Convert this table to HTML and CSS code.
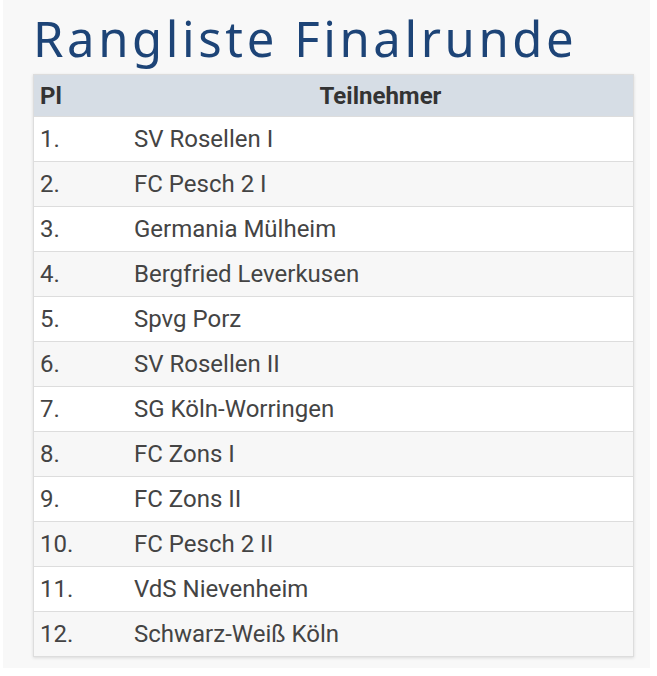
FILE: index.html
```html
<!DOCTYPE html>
<html lang="de">
<head>
<meta charset="utf-8">
<link rel="stylesheet" href="styles.css">
</head>
<body>
<div class="page">
  <h1 class="title">Rangliste Finalrunde</h1>
  <table class="ranking">
    <thead>
      <tr><th class="pl">Pl</th><th class="team">Teilnehmer</th></tr>
    </thead>
    <tbody>
      <tr><td class="pl">1.</td><td>SV Rosellen I</td></tr>
      <tr><td class="pl">2.</td><td>FC Pesch 2 I</td></tr>
      <tr><td class="pl">3.</td><td>Germania Mülheim</td></tr>
      <tr><td class="pl">4.</td><td>Bergfried Leverkusen</td></tr>
      <tr><td class="pl">5.</td><td>Spvg Porz</td></tr>
      <tr><td class="pl">6.</td><td>SV Rosellen II</td></tr>
      <tr><td class="pl">7.</td><td>SG Köln-Worringen</td></tr>
      <tr><td class="pl">8.</td><td>FC Zons I</td></tr>
      <tr><td class="pl">9.</td><td>FC Zons II</td></tr>
      <tr><td class="pl">10.</td><td>FC Pesch 2 II</td></tr>
      <tr><td class="pl">11.</td><td>VdS Nievenheim</td></tr>
      <tr><td class="pl">12.</td><td>Schwarz-Weiß Köln</td></tr>
    </tbody>
  </table>
</div>
</body>
</html>
```
FILE: styles.css
```css
html, body {
  margin: 0;
  padding: 0;
  background: #ffffff;
}
.page {
  margin: 0 7px 0 3px;
  padding: 8px 13px 11px 30px;
  background: #f8f8f8;
}
.title {
  margin: 0 0 5px 0;
  font-family: "Noto Sans", sans-serif;
  font-weight: 400;
  font-size: 49px;
  letter-spacing: 3.6px;
  line-height: 61px;
  color: #1d4477;
}
.ranking {
  width: 601px;
  border-collapse: collapse;
  font-family: Roboto, sans-serif;
  font-size: 24px;
  color: #444;
  background: #fff;
  border: 1px solid #ddd;
  box-shadow: 0 1px 3px rgba(0,0,0,0.12);
}
.ranking th {
  background: #d6dde5;
  color: #333;
  font-weight: 700;
  height: 41px;
  line-height: 28px;
  padding: 0 6px;
  text-align: center;
}
.ranking th.pl {
  text-align: left;
}
.ranking td {
  height: 44px;
  line-height: 28px;
  padding: 0 6px;
  border-top: 1px solid #ddd;
  text-align: left;
}
.ranking .pl {
  width: 82px;
}
.ranking tbody tr:nth-child(even) td {
  background: #f7f7f7;
}
```
